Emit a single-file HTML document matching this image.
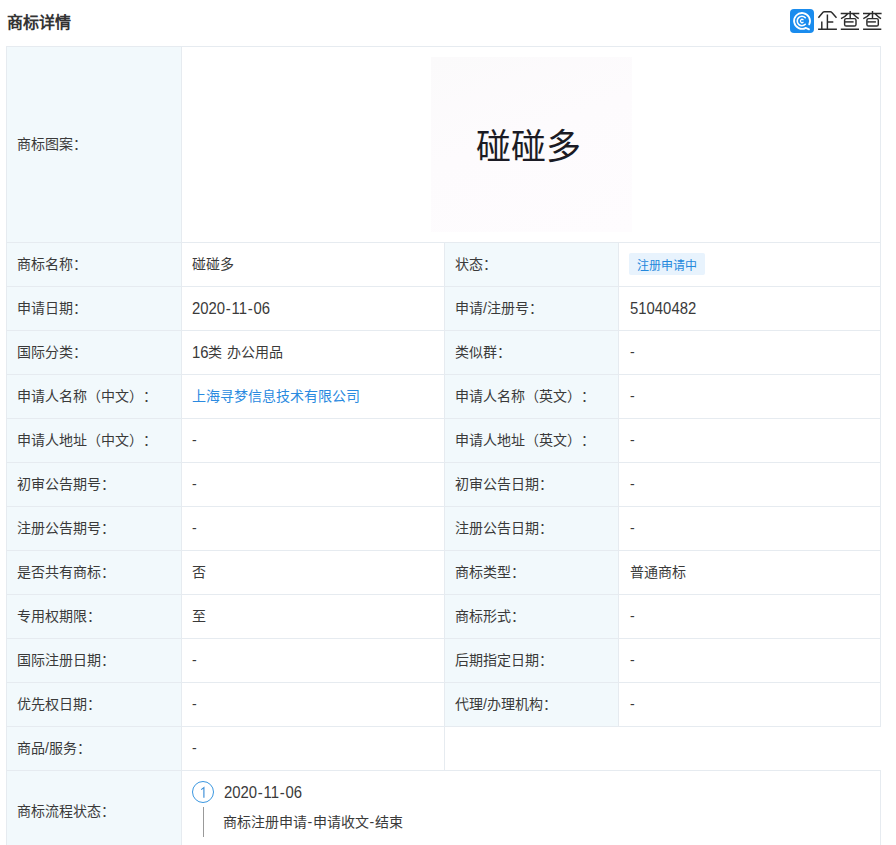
<!DOCTYPE html>
<html lang="zh-CN"><head><meta charset="utf-8"><title>商标详情</title>
<style>
html,body{margin:0;padding:0;background:#fff;width:896px;height:845px;overflow:hidden;position:relative}
body{font-family:"Liberation Sans",sans-serif;color:#3a3a3a;text-spacing-trim:space-all}
.b,.t,.big,.tag,.circ,.logo,.title{position:absolute}
.t{font-size:14px;line-height:20px;white-space:nowrap}
.n{font-size:16px;display:inline-block;transform:scaleX(0.93);transform-origin:0 0;position:relative;top:1px} .hy{padding:0 .8px} .hp{padding:0 .6px}
.cj{font-size:14px;word-spacing:1.5px}
.lk{color:#2a8ae0}
.title{left:7px;top:13px;font-size:16px;line-height:20px;font-weight:bold;color:#333}
.big{font-size:35px;line-height:40px;font-weight:500;color:#1b1b24;white-space:nowrap}
.tag{font-size:12px;line-height:27px;height:22px;overflow:hidden;padding:0 8px;width:60px;background:#e8f3fd;color:#2488dc;border-radius:2px;white-space:nowrap}
.circ{width:20px;height:20px;border:1px solid #128bed;border-radius:50%;color:#128bed;font-size:14px;line-height:20px;text-align:center}
</style></head><body>
<div class="title">商标详情</div>
<svg class="logo" width="100" height="28" viewBox="0 0 100 28" style="left:788px;top:7px">
<rect x="2" y="2" width="24" height="24" rx="4" fill="#1a8cee"/>
<g fill="none" stroke="#fff" stroke-linecap="round">
<path d="M21.2 17.4 A7.95 7.95 0 1 0 17.9 20.9 L21 22.4" stroke-width="1.8"/>
<path d="M17.3 10.7 A4.7 4.7 0 1 0 17.3 17.3" stroke-width="1.6"/>
<path d="M15.1 12.7 A1.65 1.65 0 1 0 15.1 15.3" stroke-width="1.3"/>
</g>
<g fill="none" stroke="#2b2b2b" stroke-width="1.45">
<path d="M30.4 10.8 L35 5.3 Q35.5 4.7 36.4 4.7 L42.2 4.7 Q43.1 4.7 43.6 5.3 L48.5 10.8"/>
<path d="M33.8 14.4 V22.2 M39.4 7.5 V22.2 M39.4 14.9 H45.3 M30.1 22.2 H48.9"/>
</g>
<g fill="none" stroke="#2b2b2b" stroke-width="1.45">
<path d="M52.7 6.5 H71.3 M62.2 4.1 V11.3 M59.7 6.7 Q57 10 53 11.7 M64.8 6.7 Q67.5 9.5 70.7 11.7 M52.8 22.2 H71"/>
<rect x="56.6" y="11.6" width="11.4" height="7.4" rx="1.6"/>
<path d="M57 14.9 H65.6"/>
</g>
<g transform="translate(22.3 0)" fill="none" stroke="#2b2b2b" stroke-width="1.45">
<path d="M52.7 6.5 H71.3 M62.2 4.1 V11.3 M59.7 6.7 Q57 10 53 11.7 M64.8 6.7 Q67.5 9.5 70.7 11.7 M52.8 22.2 H71"/>
<rect x="56.6" y="11.6" width="11.4" height="7.4" rx="1.6"/>
<path d="M57 14.9 H65.6"/>
</g>
</svg>
<div class="b" style="left:7px;top:47px;width:174px;height:798px;background:#f2f9fc;"></div>
<div class="b" style="left:445px;top:243px;width:173px;height:483px;background:#f2f9fc;"></div>
<div class="b" style="left:6px;top:46px;width:875px;height:1px;background:#e6ebf0;"></div>
<div class="b" style="left:6px;top:242px;width:875px;height:1px;background:#e6ebf0;"></div>
<div class="b" style="left:6px;top:286px;width:875px;height:1px;background:#e6ebf0;"></div>
<div class="b" style="left:6px;top:330px;width:875px;height:1px;background:#e6ebf0;"></div>
<div class="b" style="left:6px;top:374px;width:875px;height:1px;background:#e6ebf0;"></div>
<div class="b" style="left:6px;top:418px;width:875px;height:1px;background:#e6ebf0;"></div>
<div class="b" style="left:6px;top:462px;width:875px;height:1px;background:#e6ebf0;"></div>
<div class="b" style="left:6px;top:506px;width:875px;height:1px;background:#e6ebf0;"></div>
<div class="b" style="left:6px;top:550px;width:875px;height:1px;background:#e6ebf0;"></div>
<div class="b" style="left:6px;top:594px;width:875px;height:1px;background:#e6ebf0;"></div>
<div class="b" style="left:6px;top:638px;width:875px;height:1px;background:#e6ebf0;"></div>
<div class="b" style="left:6px;top:682px;width:875px;height:1px;background:#e6ebf0;"></div>
<div class="b" style="left:6px;top:726px;width:875px;height:1px;background:#e6ebf0;"></div>
<div class="b" style="left:6px;top:770px;width:875px;height:1px;background:#e6ebf0;"></div>
<div class="b" style="left:6px;top:46px;width:1px;height:799px;background:#e6ebf0;"></div>
<div class="b" style="left:181px;top:46px;width:1px;height:799px;background:#e6ebf0;"></div>
<div class="b" style="left:444px;top:242px;width:1px;height:529px;background:#e6ebf0;"></div>
<div class="b" style="left:618px;top:242px;width:1px;height:485px;background:#e6ebf0;"></div>
<div class="b" style="left:880px;top:46px;width:1px;height:681px;background:#e6ebf0;"></div>
<div class="b" style="left:880px;top:770px;width:1px;height:75px;background:#e6ebf0;"></div>
<div class="b" style="left:431px;top:57px;width:201px;height:175px;background:linear-gradient(160deg,#fbfafb,#fdfbfd 45%,#fefcfe);"></div>
<div class="big" style="left:476px;top:127px">碰碰多</div>
<div class="t" style="left:17px;top:134px">商标图案：</div>
<div class="t" style="left:17px;top:254px">商标名称：</div>
<div class="t" style="left:192px;top:254px">碰碰多</div>
<div class="t" style="left:455px;top:254px">状态：</div>
<div class="tag" style="left:629px;top:253px">注册申请中</div>
<div class="t" style="left:17px;top:298px">申请日期：</div>
<div class="t" style="left:192px;top:298px"><span class="n">2020<span class="hy">-</span>11<span class="hy">-</span>06</span></div>
<div class="t" style="left:455px;top:298px">申请/注册号：</div>
<div class="t" style="left:630px;top:298px"><span class="n">51040482</span></div>
<div class="t" style="left:17px;top:342px">国际分类：</div>
<div class="t" style="left:192px;top:342px"><span class="n" style="margin-right:-2px">16</span><span class="cj">类 办公用品</span></div>
<div class="t" style="left:455px;top:342px">类似群：</div>
<div class="t" style="left:630px;top:342px">-</div>
<div class="t" style="left:17px;top:386px">申请人名称（中文）：</div>
<div class="t lk" style="left:192px;top:386px">上海寻梦信息技术有限公司</div>
<div class="t" style="left:455px;top:386px">申请人名称（英文）：</div>
<div class="t" style="left:630px;top:386px">-</div>
<div class="t" style="left:17px;top:430px">申请人地址（中文）：</div>
<div class="t" style="left:192px;top:430px">-</div>
<div class="t" style="left:455px;top:430px">申请人地址（英文）：</div>
<div class="t" style="left:630px;top:430px">-</div>
<div class="t" style="left:17px;top:474px">初审公告期号：</div>
<div class="t" style="left:192px;top:474px">-</div>
<div class="t" style="left:455px;top:474px">初审公告日期：</div>
<div class="t" style="left:630px;top:474px">-</div>
<div class="t" style="left:17px;top:518px">注册公告期号：</div>
<div class="t" style="left:192px;top:518px">-</div>
<div class="t" style="left:455px;top:518px">注册公告日期：</div>
<div class="t" style="left:630px;top:518px">-</div>
<div class="t" style="left:17px;top:562px">是否共有商标：</div>
<div class="t" style="left:192px;top:562px">否</div>
<div class="t" style="left:455px;top:562px">商标类型：</div>
<div class="t" style="left:630px;top:562px">普通商标</div>
<div class="t" style="left:17px;top:606px">专用权期限：</div>
<div class="t" style="left:192px;top:606px">至</div>
<div class="t" style="left:455px;top:606px">商标形式：</div>
<div class="t" style="left:630px;top:606px">-</div>
<div class="t" style="left:17px;top:650px">国际注册日期：</div>
<div class="t" style="left:192px;top:650px">-</div>
<div class="t" style="left:455px;top:650px">后期指定日期：</div>
<div class="t" style="left:630px;top:650px">-</div>
<div class="t" style="left:17px;top:694px">优先权日期：</div>
<div class="t" style="left:192px;top:694px">-</div>
<div class="t" style="left:455px;top:694px">代理/办理机构：</div>
<div class="t" style="left:630px;top:694px">-</div>
<div class="t" style="left:17px;top:738px">商品/服务：</div>
<div class="t" style="left:192px;top:738px">-</div>
<div class="t" style="left:17px;top:801px">商标流程状态：</div>
<svg class="b" style="left:192px;top:781px" width="22" height="22" viewBox="0 0 22 22"><circle cx="11" cy="11" r="10.5" fill="none" stroke="#3b97e0" stroke-width="1"/><path d="M9.2 8.6 L11.9 6.6 V16.8" fill="none" stroke="#3b8ed8" stroke-width="1.15"/></svg>
<div class="b" style="left:203px;top:807px;width:1px;height:30px;background:#999"></div>
<div class="t" style="left:224px;top:782px"><span class="n">2020<span class="hy">-</span>11<span class="hy">-</span>06</span></div>
<div class="t" style="left:223px;top:812px">商标注册申请<span class="hp">-</span>申请收文<span class="hp">-</span>结束</div>
</body></html>
